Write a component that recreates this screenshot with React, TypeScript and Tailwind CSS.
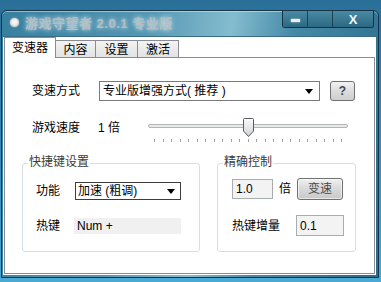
const ticks = Array.from({ length: 23 }, (_, i) => i);

function Arrow() {
  return (
    <svg width="8" height="5" viewBox="0 0 8 5" className="shrink-0">
      <path d="M0 0 H8 L4 5 Z" fill="#000" />
    </svg>
  );
}

function TitleBar() {
  return (
    <div className="flex h-[25px] items-start pl-[7px] pr-[4px]">
      {/* app icon */}
      <div className="mt-[6px] h-[11px] w-[11px] rounded-full border border-[#7d8c94] bg-[radial-gradient(circle_at_50%_45%,#f4f4f4_30%,#aeb8bd)]" />
      <span className="ml-[5px] mt-[5px] text-[13px] font-bold leading-[15px] tracking-[0.5px] text-[#b4bfc4] [text-shadow:0_0_5px_rgba(235,245,250,0.9)]">
        游戏守望者 2.0.1 专业版
      </span>
      <div className="ml-auto flex h-[17px] overflow-hidden rounded-b-[3px] border border-t-0 border-[#17323f] shadow-[inset_0_0_0_1px_rgba(170,215,230,0.35)]">
        <div className="flex w-[24px] items-end justify-center bg-[linear-gradient(#4a8aa5,#2c6882)] pb-[5px]">
          <div className="h-[3px] w-[9px] bg-[#e8f2f5] shadow-[0_0_2px_rgba(255,255,255,0.8)]" />
        </div>
        <div className="w-[25px] border-l border-[#1d4253] bg-[linear-gradient(#4a8aa5,#2c6882)]" />
        <div className="flex w-[41px] items-center justify-center border-l border-[#1d4253] bg-[linear-gradient(#4a8aa5,#2c6882)] text-[13px] font-bold leading-none text-[#eef5f7]">
          X
        </div>
      </div>
    </div>
  );
}

function Tabs() {
  return (
    <div className="flex h-[20px] items-end pl-px">
      <div className="relative z-10 -mb-px flex h-[21px] w-[52px] items-center justify-center border border-b-0 border-[#898c95] bg-white">
        变速器
      </div>
      {['内容', '设置', '激活'].map((t, i) => (
        <div
          key={t}
          className={
            '-ml-px flex h-[17px] items-center justify-center border border-b-0 border-[#898c95] bg-[linear-gradient(#f3f3f3,#e3e3e3)] pt-px ' +
            (i === 0 ? 'w-[41px]' : i === 1 ? 'w-[43px]' : 'w-[42px]')
          }
        >
          {t}
        </div>
      ))}
    </div>
  );
}

function Slider() {
  return (
    <div className="relative h-[25px] w-[200px]">
      <div className="mt-[6px] h-[4px] w-[200px] rounded-[2px] border border-[#b5b5b5] bg-[#e7eaea]" />
      <div className="mt-[11px] box-content flex w-[188px] justify-between pl-[6px]">
        {ticks.map((i) => (
          <div key={i} className="h-[3px] w-px bg-[#a0a0a0]" />
        ))}
      </div>
      {/* thumb */}
      <svg width="11" height="19" viewBox="0 0 11 19" className="absolute left-[95px] top-0">
        <defs>
          <linearGradient id="th" x1="0" y1="0" x2="0" y2="1">
            <stop offset="0" stopColor="#fbfbfb" />
            <stop offset="1" stopColor="#cfd2d4" />
          </linearGradient>
        </defs>
        <path d="M0.5 1.5 Q0.5 0.5 1.5 0.5 H9.5 Q10.5 0.5 10.5 1.5 V13 L5.5 18.5 L0.5 13 Z" fill="url(#th)" stroke="#555b5f" />
      </svg>
    </div>
  );
}

export default function App() {
  return (
    <div className="h-[282px] w-[381px] overflow-hidden bg-[linear-gradient(180deg,#2a6f98_0%,#3b8fbd_60%,#48aad4_100%)] pl-px pt-[10px] font-['Liberation_Sans','Noto_Sans_CJK_SC',sans-serif] text-[12px] text-black">
      <div className="flex h-[268px] w-[378px] flex-col rounded-t-[6px] border border-[#163546] bg-[linear-gradient(100deg,#357f9f_0%,#5597b3_35%,#84bccf_55%,#4589a7_70%,#2a6b8a_100%)] shadow-[inset_0_1px_0_rgba(200,235,245,0.6)]">
        <TitleBar />
        <div className="mb-[2px] ml-px mr-[2px] flex flex-1 flex-col border-t border-[#3a6d84] bg-white">
          <Tabs />
          <div className="mx-px mb-px flex-1 border border-[#898c95] bg-white pt-[23px]">
            {/* 变速方式 */}
            <div className="flex h-[20px] items-center pl-[27px]">
              <span className="w-[67px]">变速方式</span>
              <div className="flex h-[20px] w-[221px] items-center justify-between border border-[#7a7a7a] bg-white pl-[3px] pr-[6px]">
                <span>专业版增强方式( 推荐 )</span>
                <Arrow />
              </div>
              <div className="ml-[10px] flex h-[20px] w-[25px] items-center justify-center rounded-[3px] border border-[#707070] bg-[linear-gradient(#f2f2f2,#dcdcdc_50%,#cfcfcf)] font-bold text-[#3a4a5a]">
                ?
              </div>
            </div>

            {/* 游戏速度 */}
            <div className="mt-[17px] flex h-[25px] items-start pl-[27px]">
              <span className="flex h-[20px] w-[66px] items-center">游戏速度</span>
              <span className="flex h-[20px] w-[50px] items-center">1 倍</span>
              <Slider />
            </div>

            {/* group boxes */}
            <div className="mt-[20px] flex pl-[17px]">
              <div className="relative h-[89px] w-[178px] rounded-[3px] border border-[#d5dfe5] pl-[13px] pt-[18px]">
                <span className="absolute left-[5px] top-[-10px] bg-white px-px leading-[16px] text-[#3a3a3a]">快捷键设置</span>
                <div className="flex h-[18px] items-center">
                  <span className="w-[39px]">功能</span>
                  <div className="flex h-[18px] w-[106px] items-center justify-between border border-[#3c3c3c] bg-white pl-[2px] pr-[5px]">
                    <span>加速 (粗调)</span>
                    <Arrow />
                  </div>
                </div>
                <div className="mt-[18px] flex h-[16px] items-center">
                  <span className="w-[38px]">热键</span>
                  <div className="flex h-[16px] w-[107px] items-center bg-[#f0f0f0] pl-[3px]">Num +</div>
                </div>
              </div>

              <div className="relative ml-[17px] h-[89px] w-[139px] rounded-[3px] border border-[#d5dfe5] pl-[14px] pt-[14px]">
                <span className="absolute left-[5px] top-[-10px] bg-white px-px leading-[16px] text-[#3a3a3a]">精确控制</span>
                <div className="flex h-[22px] items-center">
                  <div className="flex h-[20px] w-[41px] items-center border border-[#a8adb0] bg-[#f3f3f3] pl-[3px]">1.0</div>
                  <span className="ml-[6px]">倍</span>
                  <div className="ml-[6px] flex h-[22px] w-[46px] items-center justify-center rounded-[3px] border border-[#707070] bg-[linear-gradient(#f0f0f0,#d9d9d9_50%,#c8c8c8)] text-[#4a4a4a] shadow-[inset_0_0_0_1px_rgba(255,255,255,0.6)]">
                    变速
                  </div>
                </div>
                <div className="mt-[15px] flex h-[21px] items-center">
                  <span className="w-[64px]">热键增量</span>
                  <div className="flex h-[21px] w-[48px] items-center border border-[#a8adb0] bg-[#f3f3f3] pl-[3px]">0.1</div>
                </div>
              </div>
            </div>
          </div>
        </div>
      </div>
    </div>
  );
}
